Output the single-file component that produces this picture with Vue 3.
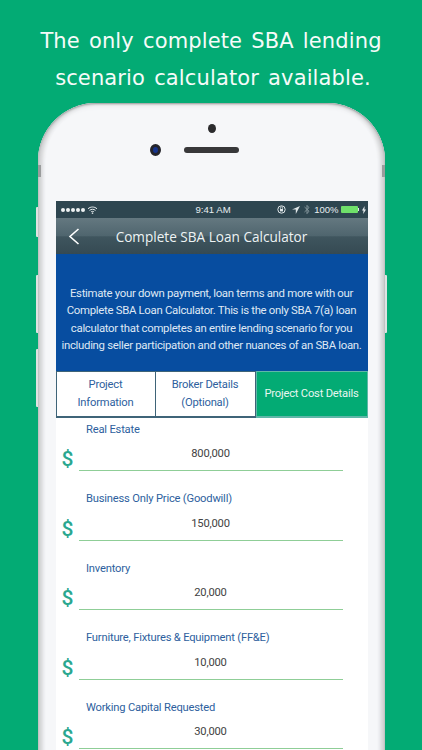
<script setup>
const tabs = [
  { text: ['Project', 'Information'], active: false },
  { text: ['Broker Details', '(Optional)'], active: false },
  { text: ['Project Cost Details'], active: true },
]
const fields = [
  { label: 'Real Estate', value: '800,000' },
  { label: 'Business Only Price (Goodwill)', value: '150,000' },
  { label: 'Inventory', value: '20,000' },
  { label: 'Furniture, Fixtures & Equipment (FF&E)', value: '10,000' },
  { label: 'Working Capital Requested', value: '30,000' },
]
</script>

<template>
  <div class="page">
    <h1 class="headline">
      <span class="line">The only complete SBA lending</span>
      <span class="line second">scenario calculator available.</span>
    </h1>
    <div class="phone">
      <i class="btn btn-mute"></i>
      <i class="btn btn-up"></i>
      <i class="btn btn-down"></i>
      <i class="btn btn-power"></i>
      <i class="band band-l"></i>
      <i class="band band-r"></i>
      <div class="bezel">
        <div class="sensor"></div>
        <div class="cam-row">
          <div class="camera"></div>
          <div class="speaker"></div>
        </div>
      </div>
      <div class="screen">
        <div class="status">
          <div class="st-left">
            <span class="dots"><b v-for="n in 5" :key="n"></b></span>
            <svg width="11" height="8" viewBox="0 0 11 8" fill="none" stroke="#e8eef0" stroke-width="1">
              <path d="M1 2.8C3.6.4 7.4.4 10 2.8M2.5 4.4c1.8-1.5 4.2-1.5 6 0M4 5.9c.9-.7 2.1-.7 3 0" />
              <circle cx="5.5" cy="7.2" r=".4" fill="#e8eef0" />
            </svg>
          </div>
          <span class="time">9:41 AM</span>
          <div class="st-right">
            <svg width="9" height="9" viewBox="0 0 9 9" fill="none" stroke="#dfe6e8" stroke-width="1">
              <circle cx="4.5" cy="4.5" r="3.7" />
              <rect x="3" y="4" width="3" height="2.4" fill="#dfe6e8" stroke="none" />
              <path d="M3.4 4V3a1.1 1.1 0 0 1 2.2 0v1" stroke-width=".7" />
            </svg>
            <svg class="arrow" width="8" height="8" viewBox="0 0 8 8"><path d="M8 0 0 3.6h3.8V8z" fill="#dfe6e8" /></svg>
            <svg width="6" height="11" viewBox="0 0 6 11" fill="none" stroke="#8b9ca2" stroke-width=".9">
              <path d="M.5 3 5 7.2 3 9.6V1.4l2 2.2L.5 8" />
            </svg>
            <span class="pct">100%</span>
            <span class="battery"></span>
            <span class="nub"></span>
            <svg width="4" height="8" viewBox="0 0 4 8"><path d="M2.6 0 0 4.4h1.5L1.2 8 4 3.4H2.4z" fill="#e8eef0" /></svg>
          </div>
        </div>
        <div class="nav">
          <svg class="back" width="12" height="17" viewBox="0 0 12 17" fill="none" stroke="#fff" stroke-width="1.6">
            <path d="M10.5 1 2 8.5l8.5 7.5" />
          </svg>
          <span class="nav-title">Complete SBA Loan Calculator</span>
        </div>
        <div class="intro">
          Estimate your down payment, loan terms and more with our Complete SBA Loan Calculator. This is the only SBA 7(a) loan calculator that completes an entire lending scenario for you including seller participation and other nuances of an SBA loan.
        </div>
        <div class="tabs">
          <div v-for="tab in tabs" :key="tab.text[0]" class="tab" :class="{ active: tab.active }">
            <span v-for="line in tab.text" :key="line">{{ line }}</span>
          </div>
        </div>
        <div class="fields">
          <div v-for="field in fields" :key="field.label" class="field">
            <div class="label">{{ field.label }}</div>
            <div class="input-row">
              <span class="dollar">$</span>
              <div class="value">{{ field.value }}</div>
            </div>
          </div>
        </div>
      </div>
    </div>
  </div>
</template>

<style>
html, body { margin: 0; background: #03ab74; }
</style>

<style scoped>
.page {
  height: 750px;
  overflow: hidden;
  background: #03ab74;
  display: flex;
  flex-direction: column;
  align-items: center;
  font-family: Roboto, "Liberation Sans", sans-serif;
}
.headline {
  margin: 0;
  height: 103px;
  flex: none;
  padding-top: 23px;
  box-sizing: border-box;
  width: 100%;
  text-align: center;
  color: #f6fbf9;
  font-family: "DejaVu Sans", sans-serif;
  font-weight: 400;
  font-size: 21px;
  line-height: 37px;
  letter-spacing: 0.13px;
  word-spacing: 2.3px;
}
.line { display: block; }
.second { padding-left: 4px; }
.phone {
  position: relative;
  width: 347px;
  height: 700px;
  flex: none;
  box-sizing: border-box;
  padding: 0 17px 0 18px;
  background: #f6f7f9;
  border-radius: 58px 58px 0 0;
  box-shadow: inset 0 1px 2px #9b9d9d, inset 5px 0 4px -1px #cfd0d1, inset -5px 0 4px -1px #cfd0d1, inset 0 0 5px 3px #e6e7e9;
}
.btn {
  position: absolute;
  width: 2px;
  background: #dfe3e2;
  border-radius: 1px 0 0 1px;
}
.btn-mute { left: -2px; top: 104px; height: 30px; }
.btn-up { left: -2px; top: 172px; height: 58px; }
.btn-down { left: -2px; top: 246px; height: 58px; }
.btn-power { right: -2px; top: 172px; height: 58px; border-radius: 0 1px 1px 0; }
.band { position: absolute; top: 62px; width: 3px; height: 12px; background: #9a9c9c; }
.band-l { left: 0; }
.band-r { right: 0; }
.bezel {
  height: 98px;
  display: flex;
  flex-direction: column;
  align-items: center;
}
.sensor {
  width: 8px;
  height: 9px;
  margin-top: 21px;
  border-radius: 50%;
  background: #2b2b2d;
}
.cam-row {
  position: relative;
  margin-top: 14px;
  width: 55px;
  height: 6px;
}
.speaker {
  width: 55px;
  height: 6px;
  border-radius: 3px;
  background: #38383a;
}
.camera {
  position: absolute;
  left: -34px;
  top: -3.5px;
  width: 5px;
  height: 6px;
  border-radius: 50%;
  background: #16348c;
  border: 3.5px solid #24242a;
}
.screen {
  background: #fff;
  height: 602px;
  overflow: hidden;
}
.status {
  height: 17px;
  background: #2e4650;
  display: flex;
  align-items: center;
  justify-content: space-between;
  position: relative;
  padding: 0 2px 0 5px;
  color: #e8eef0;
  font-family: "Liberation Sans", sans-serif;
}
.st-left, .st-right { display: flex; align-items: center; }
.dots { display: flex; gap: 1px; margin-right: 2px; }
.dots b { width: 4px; height: 4px; border-radius: 50%; background: #eef2f3; }
.time {
  position: absolute;
  left: 140px;
  font-size: 9.6px;
}
.st-right svg { margin-right: 4px; }
.st-right svg.arrow { margin-left: 2px; }
.pct { font-size: 9.5px; margin-right: 2px; }
.battery { width: 17px; height: 7px; background: #6fe06a; border-radius: 1px; }
.nub { width: 1px; height: 3px; background: #dfe6e8; margin-right: 3px; }
.st-right svg:last-child { margin-right: 0; }
.nav {
  height: 36px;
  position: relative;
  background: linear-gradient(#647880 0, #4f656e 50%, #3f555e 52%, #354a53 100%);
  display: flex;
  align-items: center;
  justify-content: center;
}
.back { position: absolute; left: 12px; top: 10px; }
.nav-title {
  color: #eef3f4;
  font-family: "Open Sans", sans-serif;
  font-size: 13.6px;
}
.intro {
  height: 117px;
  box-sizing: border-box;
  padding: 31px 5px 0;
  background: #074da0;
  color: #dfe8f4;
  text-align: center;
  font-size: 11.4px;
  letter-spacing: -0.31px;
  line-height: 17.4px;
}
.tabs {
  display: flex;
  height: 47px;
  box-sizing: border-box;
}
.tab {
  width: 100px;
  box-sizing: border-box;
  border: 1px solid #3f6478;
  border-left-width: 0;
  border-bottom-width: 2px;
  display: flex;
  flex-direction: column;
  align-items: center;
  justify-content: center;
  color: #2e5f9e;
  font-size: 11.2px;
  letter-spacing: -0.2px;
  line-height: 18px;
}
.tab:first-child { border-left-width: 1px; }
.tab.active {
  flex: 1;
  background: #03ab74;
  border-color: #5fb7a8;
  border-left-width: 1px;
  color: #e8f6f0;
}
.fields { padding-top: 3.5px; }
.field {
  height: 69.5px;
  box-sizing: border-box;
  padding-left: 6px;
}
.label {
  padding-left: 24.5px;
  color: #2e5f9e;
  font-size: 11.2px;
  letter-spacing: -0.2px;
  line-height: 15px;
}
.input-row {
  display: flex;
  align-items: flex-end;
  margin-top: 7px;
}
.dollar {
  width: 17px;
  color: #2aa78f;
  font-family: Roboto, sans-serif;
  font-weight: 500;
  font-size: 21px;
  line-height: 24px;
}
.value {
  width: 264px;
  height: 27.5px;
  box-sizing: border-box;
  padding-top: 2.5px;
  border-bottom: 1.5px solid #8fce97;
  color: #424242;
  text-align: center;
  font-size: 11.2px;
  letter-spacing: -0.2px;
  line-height: 15px;
}
</style>
